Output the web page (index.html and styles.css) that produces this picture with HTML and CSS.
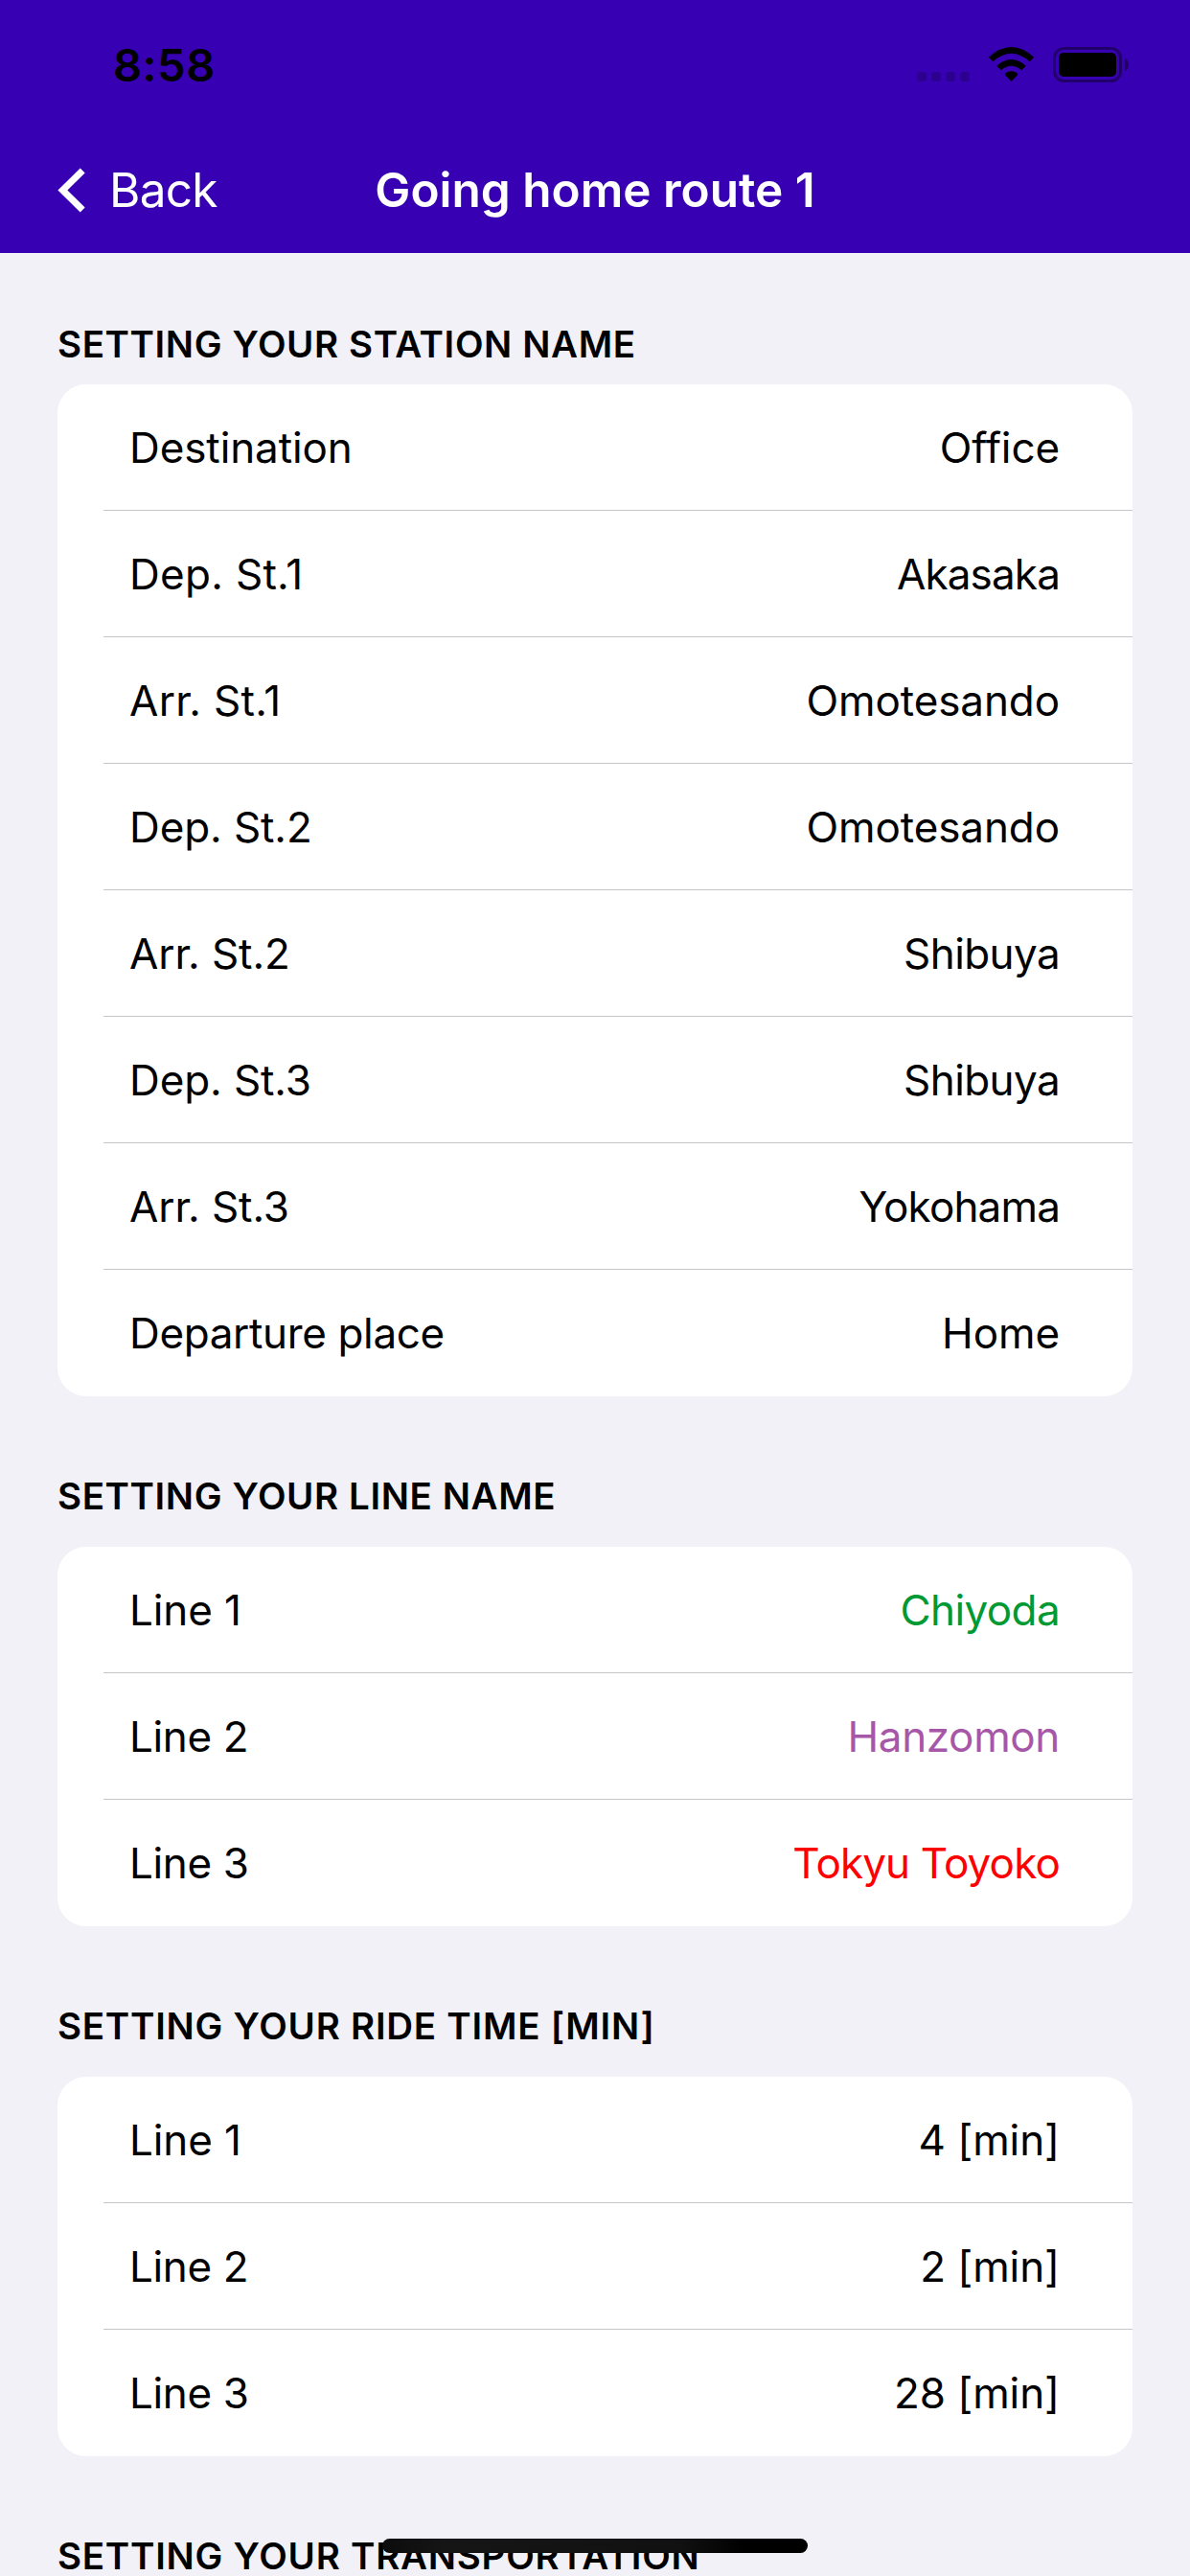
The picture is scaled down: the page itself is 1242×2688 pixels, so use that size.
FILE: index.html
```html
<!DOCTYPE html>
<html lang="en">
<head>
<meta charset="utf-8">
<title>Going home route 1</title>
<link rel="stylesheet" href="styles.css">
</head>
<body>
<div class="screen">
  <header class="header">
    <div class="status">
      <span class="clock">8:58</span>
      <svg class="status-icons" width="224" height="40" viewBox="0 0 224 40">
        <g opacity="0.2">
          <rect x="2" y="27" width="10" height="10" rx="3"/>
          <rect x="17" y="27" width="10" height="10" rx="3"/>
          <rect x="32" y="27" width="10" height="10" rx="3"/>
          <rect x="47" y="27" width="10" height="10" rx="3"/>
        </g>
        <path d="M100.5 37 L94 30.200 Q93.500 28.800 94.500 28 Q100.500 24.400 106.500 28 Q107.500 28.800 107 30.200 Z"/>
        <path d="M89.700 25.300 L85.200 20.800 Q100.500 7.200 115.800 20.800 L111.300 25.300 Q100.500 16.300 89.700 25.300 Z"/>
        <path d="M81.300 16.300 L76.800 11.800 Q100.500 -9.800 124.200 11.800 L119.700 16.300 Q100.500 -0.800 81.300 16.300 Z"/>
        <rect x="145.500" y="2.500" width="69" height="34" rx="10" fill="none" stroke="#000" stroke-width="3" opacity="0.4"/>
        <rect x="150" y="7" width="60" height="25" rx="5"/>
        <path d="M219 13 Q223 15 223 19.500 Q223 24 219 26 Z" opacity="0.4"/>
      </svg>
    </div>
    <nav class="navbar">
      <a class="back">
        <svg class="chevron" width="30" height="48" viewBox="0 0 30 48"><path d="M26.200 4 L5.400 24.500 L26.200 45" fill="none" stroke="#fff" stroke-width="7"/></svg>
        <span class="back-label">Back</span>
      </a>
      <h1 class="title">Going home route 1</h1>
    </nav>
  </header>
  <main class="content">
    <section class="group">
      <h2 class="heading first">SETTING YOUR STATION NAME</h2>
      <div class="card">
        <div class="row"><span>Destination</span><span>Office</span></div>
        <div class="row"><span class="loose">Dep. St.1</span><span class="tighter">Akasaka</span></div>
        <div class="row"><span class="loose">Arr. St.1</span><span>Omotesando</span></div>
        <div class="row"><span>Dep. St.2</span><span>Omotesando</span></div>
        <div class="row"><span>Arr. St.2</span><span class="tight">Shibuya</span></div>
        <div class="row"><span>Dep. St.3</span><span class="tight">Shibuya</span></div>
        <div class="row"><span>Arr. St.3</span><span class="tighter">Yokohama</span></div>
        <div class="row"><span class="snug">Departure place</span><span>Home</span></div>
      </div>
    </section>
    <section class="group">
      <h2 class="heading">SETTING YOUR LINE NAME</h2>
      <div class="card">
        <div class="row"><span>Line 1</span><span class="tight green">Chiyoda</span></div>
        <div class="row"><span class="snug">Line 2</span><span class="snug purple">Hanzomon</span></div>
        <div class="row"><span class="snug">Line 3</span><span class="tighter red">Tokyu Toyoko</span></div>
      </div>
    </section>
    <section class="group">
      <h2 class="heading wide">SETTING YOUR RIDE TIME [MIN]</h2>
      <div class="card">
        <div class="row"><span>Line 1</span><span>4 [min]</span></div>
        <div class="row"><span class="snug">Line 2</span><span>2 [min]</span></div>
        <div class="row"><span class="snug">Line 3</span><span>28 [min]</span></div>
      </div>
    </section>
    <section class="group">
      <h2 class="heading wide">SETTING YOUR TRANSPORTATION</h2>
    </section>
  </main>
  <div class="home-indicator"></div>
</div>
</body>
</html>
```

FILE: styles.css
```css
* { box-sizing: border-box; }
body {
  margin: 0;
  font-family: Inter, "Liberation Sans", sans-serif;
  color: #000;
}
.screen {
  position: relative;
  width: 1242px;
  height: 2688px;
  overflow: hidden;
  background: #f2f1f7;
}
.header {
  height: 264px;
  background: #3700b3;
}
.status {
  display: flex;
  justify-content: space-between;
  height: 132px;
  padding: 48px 63px 0 118px;
}
.clock {
  font-size: 47px;
  line-height: 40px;
  font-weight: 600;
  letter-spacing: 0.5px;
}
.navbar {
  display: grid;
  grid-template-columns: 1fr auto 1fr;
  align-items: center;
  height: 132px;
  padding: 0 60px;
  color: #fff;
}
.back {
  display: flex;
  align-items: center;
  gap: 24px;
  font-size: 49.5px;
  line-height: 60px;
  letter-spacing: -0.7px;
}
.title {
  margin: 0;
  font-size: 49.5px;
  line-height: 60px;
  font-weight: 600;
}
.content { padding: 0 60px; }
.heading {
  margin: 0;
  height: 157px;
  padding-top: 80px;
  font-size: 38.5px;
  line-height: 48px;
  font-weight: 600;
  letter-spacing: 0.6px;
}
.heading.first {
  height: 137px;
  padding-top: 71px;
}
.heading.wide { letter-spacing: 0.75px; }
.card {
  border-radius: 30px;
  background: #fff;
  overflow: hidden;
}
.row {
  display: flex;
  justify-content: space-between;
  align-items: center;
  height: 132px;
  margin-left: 48px;
  padding: 0 76px 0 27px;
  border-bottom: 1px solid #c6c6c8;
  font-size: 44px;
  line-height: 54px;
  letter-spacing: -0.1px;
}
.row:last-child { border-bottom-color: transparent; }
.loose { letter-spacing: 0.3px; }
.snug { letter-spacing: -0.35px; }
.tight { letter-spacing: -0.6px; }
.tighter { letter-spacing: -0.85px; }
.green { color: #009933; }
.purple { color: #a757a8; }
.red { color: #ff0000; }
.home-indicator {
  position: absolute;
  left: 399px;
  bottom: 24px;
  width: 444px;
  height: 15px;
  border-radius: 8px;
  background: linear-gradient(90deg, #0c0c0c, #151515 15%, #111 70%, #000 85%);
}
```
